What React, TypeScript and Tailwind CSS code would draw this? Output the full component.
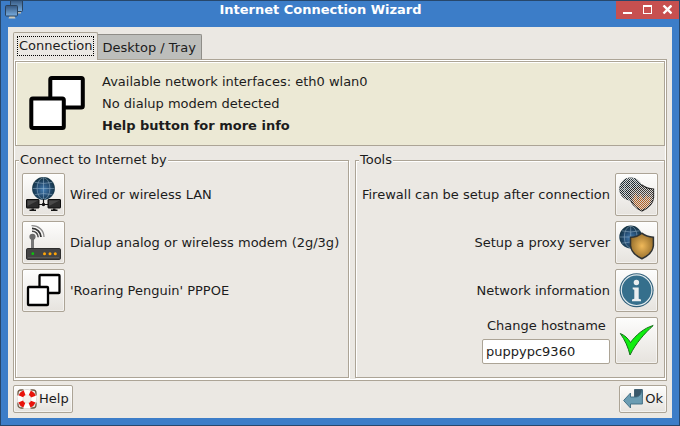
import { useState } from "react";
import type { ReactNode } from "react";

const RAISED =
  "flex items-center justify-center rounded-[2px] border border-[#aca496] bg-linear-to-b from-[#fdfdfc] to-[#e6e3de] shadow-[inset_0_0_0_1px_#ffffff80]";

export default function App() {
  const [hostname, setHostname] = useState("puppypc9360");

  return (
    <div className="flex min-h-screen flex-col border border-[#27476b] bg-[#3c7dc8] font-['DejaVu_Sans',sans-serif] text-[13px] leading-5 text-[#1c1c1c]">
      <TitleBar title="Internet Connection Wizard" />

      <main className="mx-[7px] mb-[7px] flex flex-1 flex-col gap-1 bg-[#ebe8e3] p-[5px]">
        <div className="flex flex-1 flex-col">
          <div role="tablist" className="relative z-10 -mb-px flex items-end">
            <button
              type="button"
              role="tab"
              aria-selected="true"
              className="h-7 rounded-t-[2px] border border-b-0 border-[#aca496] bg-[#ebe8e3] px-[3px] pt-[3px] pb-1"
            >
              <span className="flex h-5 items-center border border-dotted border-black pl-px">
                Connection
              </span>
            </button>
            <button
              type="button"
              role="tab"
              aria-selected="false"
              className="h-[26px] rounded-tr-[2px] border border-l-0 border-[#8f8d88] border-b-[#aca496] bg-[#bdbebb] px-[5px] pt-px"
            >
              Desktop / Tray
            </button>
          </div>

          <div
            role="tabpanel"
            className="flex flex-1 flex-col gap-1 border border-[#aca496] p-px pb-[2px] shadow-[inset_0_0_0_1px_#ffffff]"
          >
            <section className="flex min-h-[85px] items-center gap-4 border border-[#aca496] bg-[#ece9d5] px-[13px] shadow-[inset_1px_1px_0_#ffffff]">
              <WindowsIcon />
              <div className="leading-[22px]">
                <p>Available network interfaces: eth0 wlan0</p>
                <p>No dialup modem detected</p>
                <p className="font-bold">Help button for more info</p>
              </div>
            </section>

            <div className="flex flex-1 gap-[6px]">
              <Frame title="Connect to Internet by" className="flex-1">
                <ConnectRow label="Wired or wireless LAN" icon={<LanIcon />} />
                <ConnectRow
                  label="Dialup analog or wireless modem (2g/3g)"
                  icon={<ModemIcon />}
                />
                <ConnectRow label="'Roaring Penguin' PPPOE" icon={<PppoeIcon />} />
              </Frame>

              <Frame title="Tools">
                <ToolRow
                  label="Firewall can be setup after connection"
                  icon={<FirewallIcon />}
                  disabled
                />
                <ToolRow label="Setup a proxy server" icon={<ProxyIcon />} />
                <ToolRow label="Network information" icon={<InfoIcon />} />
                <div className="flex justify-end gap-[5px]">
                  <div className="flex flex-col items-end justify-between">
                    <label htmlFor="hostname" className="w-[123px] leading-[18px]">
                      Change hostname
                    </label>
                    <input
                      id="hostname"
                      type="text"
                      value={hostname}
                      onChange={(e) => setHostname(e.target.value)}
                      className="h-[25px] w-32 rounded-[2px] border border-[#aca496] bg-white px-[3px] outline-none"
                    />
                  </div>
                  <button
                    type="button"
                    aria-label="Apply hostname"
                    className={`h-[47px] w-[43px] ${RAISED}`}
                  >
                    <CheckIcon />
                  </button>
                </div>
              </Frame>
            </div>
          </div>
        </div>

        <footer className="flex justify-between">
          <button type="button" className={`h-7 gap-[2px] px-[3px] ${RAISED}`}>
            <LifebuoyIcon />
            Help
          </button>
          <button type="button" className={`h-7 gap-[2px] px-[3px] ${RAISED}`}>
            <ReturnIcon />
            Ok
          </button>
        </footer>
      </main>
    </div>
  );
}

function TitleBar({ title }: { title: string }) {
  return (
    <header className="flex h-[26px] items-start">
      <div className="pl-1">
        <ScreensIcon />
      </div>
      <h1 className="flex-1 text-center text-[13px] leading-[18px] font-bold text-white">
        {title}
      </h1>
      <div className="flex h-[18px] w-[63px] justify-end bg-[#c75050] pr-[2px]">
        <WindowButton label="Minimize">
          <path d="M0 8h9" />
        </WindowButton>
        <WindowButton label="Maximize">
          <path d="M.5 0v9M8.5 0v9M0 8.5h9" strokeWidth="1" />
          <path d="M0 1h9" />
        </WindowButton>
        <WindowButton label="Close">
          <path d="m.5.5 8 8M8.500.5l-8 8" strokeWidth="2.4" />
        </WindowButton>
      </div>
    </header>
  );
}

function WindowButton({ label, children }: { label: string; children: ReactNode }) {
  return (
    <button
      type="button"
      aria-label={label}
      className="flex w-5 items-center justify-center"
    >
      <svg width="10" height="10" viewBox="-1 0 10 10" fill="none" stroke="#fff" strokeWidth="2">
        {children}
      </svg>
    </button>
  );
}

function Frame({
  title,
  className = "",
  children,
}: {
  title: string;
  className?: string;
  children: ReactNode;
}) {
  return (
    <fieldset
      className={`border border-[#aca496] px-[6px] pb-1 shadow-[inset_1px_1px_0_#ffffff,1px_1px_0_#ffffff] ${className}`}
    >
      <legend className="-ml-[3px] bg-[#ebe8e3] px-px leading-5">{title}</legend>
      <div className="flex flex-col gap-[5px] pt-[3px]">{children}</div>
    </fieldset>
  );
}

function ConnectRow({ label, icon }: { label: string; icon: ReactNode }) {
  return (
    <label className="flex items-center gap-[5px]">
      <button type="button" className={`size-[43px] shrink-0 ${RAISED}`}>
        {icon}
      </button>
      {label}
    </label>
  );
}

function ToolRow({
  label,
  icon,
  disabled = false,
}: {
  label: string;
  icon: ReactNode;
  disabled?: boolean;
}) {
  return (
    <label className="flex items-center justify-end gap-[5px]">
      {label}
      <button
        type="button"
        disabled={disabled}
        className={`size-[43px] shrink-0 ${RAISED}`}
      >
        {icon}
      </button>
    </label>
  );
}

function ScreensIcon() {
  return (
    <svg width="20" height="18" viewBox="0 0 20 18">
      <defs>
        <linearGradient id="screen" x1="0" y1="0" x2="0" y2="1">
          <stop offset="0" stopColor="#34567f" />
          <stop offset="1" stopColor="#78ade0" />
        </linearGradient>
      </defs>
      <path d="M11 11h5v1.5h-5z" fill="#b9b9ae" />
      <rect x="5.5" y="-1" width="12" height="11.5" rx="1" fill="url(#screen)" stroke="#2b425c" />
      <path d="M4.5 15h5l1 2.5h-7z" fill="#c9c9bd" />
      <rect x=".5" y="4.5" width="12" height="10.5" rx="1" fill="url(#screen)" stroke="#2b425c" />
    </svg>
  );
}

function WindowsIcon() {
  return (
    <svg width="57" height="55" viewBox="0 0 57 55" fill="#fff" stroke="#000" strokeWidth="4" strokeLinejoin="round">
      <rect x="21.3" y="2" width="32.5" height="29.5" rx="1.5" />
      <rect x="2.3" y="22.5" width="32.5" height="29.5" rx="1.5" />
    </svg>
  );
}

function PppoeIcon() {
  return (
    <svg width="37" height="37" viewBox="-1 0 37 37" fill="#fff" stroke="#000" strokeWidth="2.3" strokeLinejoin="round">
      <rect x="13.5" y="3" width="20" height="18" rx=".8" />
      <rect x="2" y="15" width="20" height="18" rx=".8" />
    </svg>
  );
}

function Globe({ cx, cy }: { cx: number; cy: number }) {
  return (
    <g transform={`translate(${cx} ${cy})`}>
      <defs>
        <radialGradient id="globe" cx=".5" cy=".55" r=".55">
          <stop offset="0" stopColor="#4680b5" />
          <stop offset=".5" stopColor="#264f76" />
          <stop offset="1" stopColor="#12303f" />
        </radialGradient>
      </defs>
      <circle r="11.4" fill="url(#globe)" />
      <g fill="none" stroke="#a9c4d8" strokeWidth=".6" opacity=".75">
        <path d="M0-11V11M-11 0H11" />
        <ellipse rx="6.4" ry="10.8" />
        <path d="M-9-6.2Q0-3.8 9-6.2M-9 6.2Q0 3.8 9 6.2" />
      </g>
    </g>
  );
}

function LanIcon() {
  return (
    <svg width="37" height="37" viewBox="-1 0 37 37">
      <Globe cx={17.5} cy={12.5} />
      <path d="M17.5 23V28.5M13 28.5h9" stroke="#111" strokeWidth="1.2" />
      <circle cx="17.5" cy="28.5" r="1.7" fill="#111" />
      <g fill="#2b2b2b" stroke="#0c0c0c">
        <rect x=".5" y="23.5" width="12.5" height="8.5" rx=".4" />
        <rect x="22" y="23.5" width="12.5" height="8.5" rx=".4" />
      </g>
      <g fill="#494949">
        <path d="M1.5 24.5H12L1.5 30z" />
        <path d="M23 24.5h10.5L23 30z" />
      </g>
      <g fill="#161616">
        <path d="M5.5 32.5H8v1h2V35H3.500v-1.500h2z" />
        <path d="M27 32.5h2.500v1h2V35H25v-1.500h2z" />
      </g>
    </svg>
  );
}

function ModemIcon() {
  return (
    <svg width="37" height="37" viewBox="-1 0 37 37" fill="none">
      <path d="M6.5 15v10" stroke="#777" strokeWidth="3" />
      <circle cx="6.5" cy="12.8" r="3.1" fill="#6a6a6a" />
      <path d="M6 7.2a6 6 0 0 1 6.2 6" stroke="#4a4a4a" strokeWidth="1.5" />
      <path d="M6 4.300c5 .1 8.700 3.600 9 8.700" stroke="#333" strokeWidth="1.8" />
      <path d="M5.5 1.600C12.500 1.400 18 6.300 18 13" stroke="#8a8a8a" strokeWidth="1.3" />
      <rect x=".5" y="24.5" width="34" height="11" rx="1.3" fill="#454545" stroke="#2e2e2e" />
      <path d="M2 33.5h31" stroke="#5a5a5a" />
      <circle cx="6.8" cy="29.7" r="1.4" fill="#0cc40c" />
      <g fill="#ffa60a">
        <circle cx="18.5" cy="29.7" r="1.5" />
        <circle cx="24" cy="29.7" r="1.5" />
        <circle cx="29.3" cy="29.7" r="1.5" />
      </g>
    </svg>
  );
}

const SHIELD =
  "M11.5 13.2c4.500 0 8.300-1.300 11.300-4 3 2.500 6.900 3.900 11.600 4v8.300c-.5 6-5 10.300-11.500 13.200-6.500-3-10.900-7.200-11.400-13.200z";

function ProxyIcon() {
  return (
    <svg width="37" height="37" viewBox="-1 0 37 37">
      <defs>
        <radialGradient id="brass" cx=".5" cy=".5" r=".6">
          <stop offset="0" stopColor="#f0b95a" />
          <stop offset="1" stopColor="#8a6426" />
        </radialGradient>
      </defs>
      <Globe cx={11.7} cy={13} />
      <path d={SHIELD} fill="url(#brass)" stroke="#2f3334" strokeWidth="1.5" />
    </svg>
  );
}

// greyed out: every other pixel is knocked back to the button colour
function FirewallIcon() {
  return (
    <svg width="37" height="37" viewBox="-1 0 37 37">
      <defs>
        <linearGradient id="flame" x1="0" y1="0" x2="0" y2="1">
          <stop offset="0" stopColor="#2b2b2b" />
          <stop offset=".4" stopColor="#4d443f" />
          <stop offset="1" stopColor="#8a4a20" />
        </linearGradient>
        <pattern id="stipple" width="2" height="2" patternUnits="userSpaceOnUse">
          <path d="M0 0h1v1H0zM1 1h1v1H1z" fill="#d6d5d2" shapeRendering="crispEdges" />
        </pattern>
        <clipPath id="firewall">
          <circle cx="11.7" cy="13" r="11.4" />
          <path d={SHIELD} />
        </clipPath>
      </defs>
      <circle cx="11.7" cy="13" r="11.4" fill="#16252e" />
      <g fill="none" stroke="#8fa0aa" strokeWidth=".6">
        <path d="M11.7 2v22M.7 13h22" />
        <ellipse cx="11.7" cy="13" rx="6.4" ry="10.8" />
      </g>
      <path d={SHIELD} fill="url(#flame)" stroke="#1e1e1e" strokeWidth="1.5" />
      <path
        d="M14.500 25c-.5-3 1.500-4 1.500-8 2 2 2.500 4 2.500 7 1.500-1 2-3 2.500-6 2 2 2.500 3 3 6 1.500-1 2.500-3 3-6 1.500 2 1.500 3 1.500 5 1-1 2-2 2.500-4 .5 4 .5 7-1 9-1.500 2.500-4 4.500-7 5.500-4-1.500-7.500-4-8.500-8.500z"
        fill="#c8651c"
        opacity=".8"
      />
      <rect width="36" height="36" fill="url(#stipple)" clipPath="url(#firewall)" />
    </svg>
  );
}

function InfoIcon() {
  return (
    <svg width="37" height="37" viewBox="-1 0 37 37">
      <circle cx="17.6" cy="18.2" r="17" fill="#2f5f7a" />
      <circle cx="17.6" cy="18.2" r="15.3" fill="#356f8c" stroke="#dfe9ec" strokeWidth="1.2" />
      <circle cx="17.4" cy="10.5" r="2.7" fill="#e9eef0" />
      <path
        d="M13.7 15.5h6v11.300l2.300.8v1.700h-9v-1.700l2.300-.8v-9l-1.600-.6z"
        fill="#e9eef0"
      />
    </svg>
  );
}

function CheckIcon() {
  return (
    <svg width="37" height="37" viewBox="-1 -1 37 37">
      <path
        d="M1.3 10.5c4.200 1.700 7.700 4.700 10.200 9C16.500 12.500 25 5 34.200 2.500 25.500 10.500 17 20 11 32 9.300 24.500 6 17 1.300 10.500z"
        fill="#0fee0f"
        stroke="#15701a"
        strokeLinejoin="round"
      />
    </svg>
  );
}

function LifebuoyIcon() {
  return (
    <svg width="20" height="20" viewBox="0 0 20 20" fill="none">
      <g stroke="#6e5a45" strokeWidth="1.3">
        <path d="M1 6.500V4a3 3 0 0 1 3-3h2.500M13.500 1H16a3 3 0 0 1 3 3v2.500M19 13.500V16a3 3 0 0 1-3 3h-2.500M6.500 19H4a3 3 0 0 1-3-3v-2.500" />
      </g>
      <circle cx="10" cy="10" r="6.8" stroke="#c9c5c0" strokeWidth="5.8" />
      <circle cx="10" cy="10" r="6.8" stroke="#fff" strokeWidth="5" />
      <circle
        cx="10"
        cy="10"
        r="6.8"
        stroke="#e8130c"
        strokeWidth="5"
        strokeDasharray="5.34 5.34"
        strokeDashoffset="-2.67"
      />
    </svg>
  );
}

function ReturnIcon() {
  return (
    <svg width="20" height="20" viewBox="0 0 20 20" strokeLinejoin="round">
      <path d="M11.5.5h7.800v8h-7.800z" fill="#39586a" stroke="#2f5163" strokeWidth=".8" />
      <path
        d="M.6 11.500 7.500 4v4h5c3.500 0 5.800-2.500 6-6.500l.9 0v13.500H7.500v4z"
        fill="#6b9db3"
        stroke="#3d6a80"
        strokeWidth=".9"
      />
    </svg>
  );
}
